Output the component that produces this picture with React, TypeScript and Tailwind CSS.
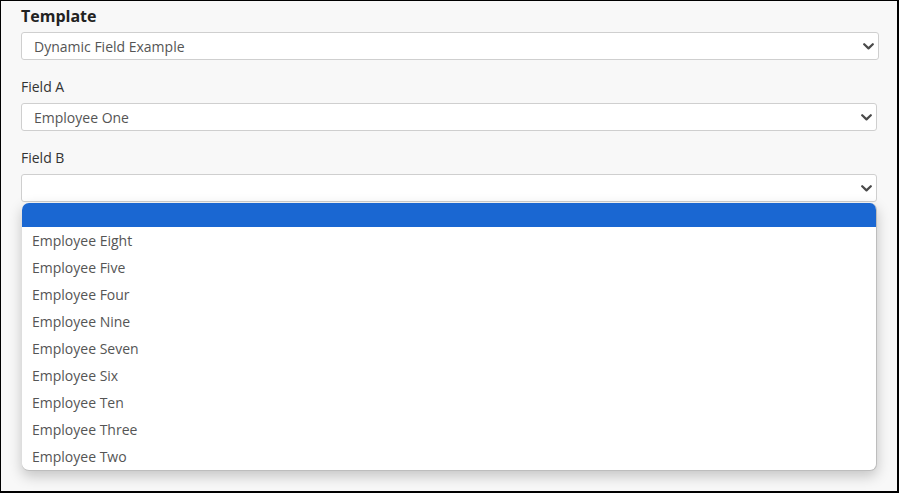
import React from "react";

const employees = [
  "Employee Eight",
  "Employee Five",
  "Employee Four",
  "Employee Nine",
  "Employee Seven",
  "Employee Six",
  "Employee Ten",
  "Employee Three",
  "Employee Two",
];

function Chevron() {
  return (
    <svg width="11" height="7" viewBox="0 0 11 7" className="shrink-0">
      <path
        d="M1.2 1.2 L5.5 5.4 L9.8 1.2"
        fill="none"
        stroke="#4a4a4a"
        strokeWidth="2.2"
        strokeLinecap="round"
        strokeLinejoin="round"
      />
    </svg>
  );
}

function FakeSelect({ value, width }: { value: string; width: string }) {
  return (
    <div
      className={`${width} h-[28px] flex items-center justify-between pl-[12px] pr-[4px] bg-white border border-[#cfcfcf] rounded-[3px] text-[14px] text-[#555]`}
    >
      <span className="truncate">{value}</span>
      <Chevron />
    </div>
  );
}

export default function App() {
  return (
    <div
      className="w-[899px] h-[493px] bg-[#f8f8f8] border-l border-t border-r-2 border-b-2 border-black overflow-hidden"
      style={{ fontFamily: '"Open Sans", "Noto Sans", Arial, sans-serif' }}
    >
      <div className="pl-[20px] pt-[4px] flex flex-col">
        {/* Template */}
        <div className="text-[16px] leading-[22px] font-bold text-[#222]">Template</div>
        <div className="mt-[5px]">
          <FakeSelect value="Dynamic Field Example" width="w-[858px]" />
        </div>

        {/* Field A */}
        <div className="mt-[17px] text-[14px] leading-[20px] text-[#333]">Field A</div>
        <div className="mt-[6px]">
          <FakeSelect value="Employee One" width="w-[856px]" />
        </div>

        {/* Field B */}
        <div className="mt-[17px] text-[14px] leading-[20px] text-[#333]">Field B</div>
        <div className="mt-[6px] relative">
          <FakeSelect value="" width="w-[856px]" />

          {/* open dropdown list */}
          <div className="absolute left-[1px] top-[29px] w-[855px] bg-white rounded-[7px] border border-[#bdbdbd] border-t-0 border-l-0 shadow-[0_5px_14px_rgba(0,0,0,0.22)] overflow-hidden">
            <div className="h-[24px] bg-[#1a67d2]" />
            {employees.map((e) => (
              <div
                key={e}
                className="h-[27px] flex items-center pl-[10px] text-[14px] text-[#555]"
              >
                {e}
              </div>
            ))}
          </div>
        </div>
      </div>
    </div>
  );
}
